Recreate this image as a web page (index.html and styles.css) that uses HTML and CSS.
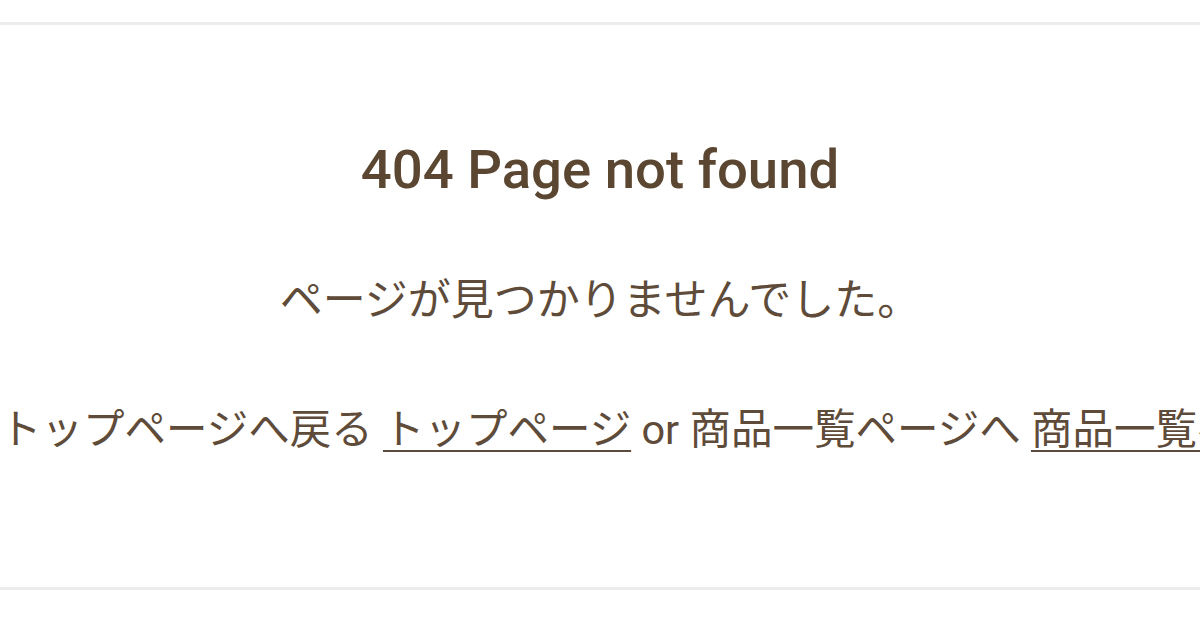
FILE: index.html
```html
<!DOCTYPE html>
<html lang="ja">
<head>
    <meta charset="UTF-8">
    <meta name="viewport" content="width=device-width, initial-scale=1.0">
    <title>404 Page not found</title>
    <link rel="stylesheet" href="styles.css">
</head>
<body>
    <main class="not-found">

        <h1 class="not-found-title">404 Page not found</h1>

        <p class="not-found-text">ページが見つかりませんでした。</p>

        <!-- 戻るリンク -->
        <p class="not-found-links">
            トップページへ戻る <a href="#">トップページ</a> or 商品一覧ページへ <a href="#">商品一覧ページ</a>
        </p>

    </main>
</body>
</html>
```

FILE: styles.css
```css
html, body {
    margin: 0;
    padding: 0;
}

body {
    font-family: Roboto, "Noto Sans CJK JP", sans-serif;
    color: #5e4b39;
    background-color: #ffffff;
    overflow: hidden;
}

.not-found {
    margin-top: 22px;
    height: 568px;
    border-top: 3px solid #ececec;
    border-bottom: 3px solid #ececec;
    padding-top: 112px;
    box-sizing: border-box;
}

.not-found-title {
    margin: 0;
    font-size: 54.5px;
    line-height: 64px;
    font-weight: 500;
    text-align: center;
    color: #5a4631;
}

.not-found-text {
    margin: 69px 0 0 0;
    font-size: 43px;
    line-height: 60px;
    text-align: center;
}

.not-found-links {
    margin: 70px 0 0 0;
    font-size: 41.5px;
    line-height: 60px;
    white-space: nowrap;
}

.not-found-links a {
    color: inherit;
    text-decoration: underline;
    text-decoration-thickness: 2px;
    text-underline-offset: 6px;
}
```
